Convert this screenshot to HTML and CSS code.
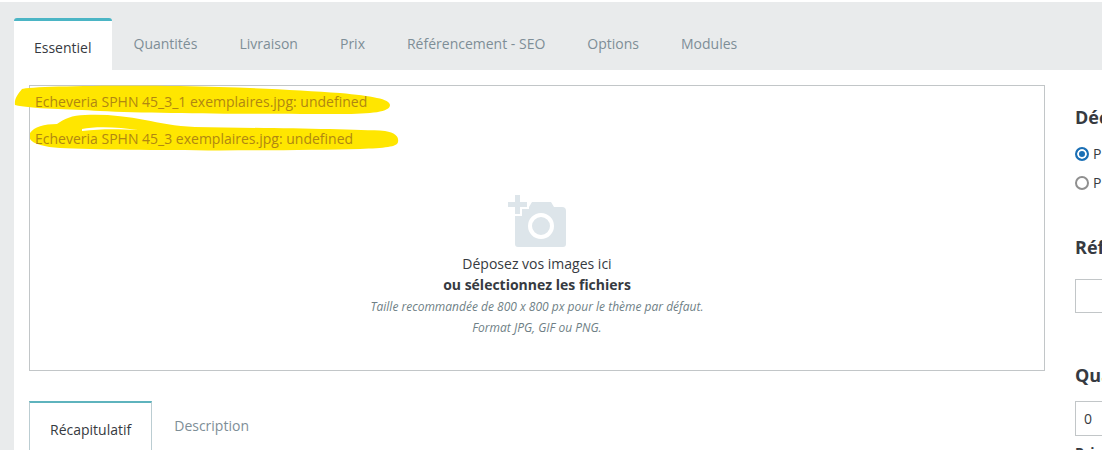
FILE: index.html
```html
<!DOCTYPE html>
<html lang="fr">
<head>
    <meta charset="UTF-8">
    <title>Produit</title>
    <link rel="stylesheet" href="styles.css">
</head>
<body>
    <nav class="tabs">
        <a class="tab active">Essentiel</a>
        <a class="tab">Quantités</a>
        <a class="tab">Livraison</a>
        <a class="tab">Prix</a>
        <a class="tab">Référencement - SEO</a>
        <a class="tab">Options</a>
        <a class="tab">Modules</a>
    </nav>
    <div class="panel">
        <main class="main">
            <section class="dropzone">
                <!-- coups de surligneur par-dessus les messages d'erreur -->
                <svg class="marker" width="420" height="80" viewBox="0 0 420 80">
                    <path fill="#ffe600" d="M22 4C28 1 120 0 180 1C240 2 300 5 340 8C372 11 390 14 390 20C390 27 372 29 340 29C280 29 160 29 100 26C70 24 30 24 15 20C14 14 18 9 22 4Z"/>
                    <path fill="#ffe600" d="M30 48C34 42 44 39 57 39C64 34 72 30 85 30C105 29 125 31 145 35C160 38 175 41 195 42C260 43 350 44 385 46C396 48 399 52 398 57C397 62 385 63 360 64C280 66 120 66 60 63C45 62 33 59 30 54Z"/>
                    <path fill="#fff" d="M82 44C95 41 120 42 138 45C115 44 100 44 82 46Z"/>
                </svg>
                <div class="errors">
                    <p>Echeveria SPHN 45_3_1 exemplaires.jpg: undefined</p>
                    <p>Echeveria SPHN 45_3 exemplaires.jpg: undefined</p>
                </div>
                <div class="drop-msg">
                    <svg class="camera" width="60" height="54" viewBox="0 0 60 54">
                        <path fill="#dde5ea" d="M8 13H22L25 8H44L47 13H55Q59 13 59 17V50Q59 53 56 53H11Q8 53 8 50Z"/>
                        <path fill="#dde5ea" stroke="#fff" stroke-width="2" d="M7 0H14V7H21V14H14V21H7V14H0V7H7Z"/>
                        <circle cx="34" cy="32" r="11" fill="none" stroke="#fff" stroke-width="4"/>
                    </svg>
                    <p class="drop-title">Déposez vos images ici</p>
                    <p class="drop-link">ou sélectionnez les fichiers</p>
                    <p class="drop-hint">Taille recommandée de 800 x 800 px pour le thème par défaut.</p>
                    <p class="drop-hint">Format JPG, GIF ou PNG.</p>
                </div>
            </section>
            <nav class="subtabs">
                <a class="subtab active">Récapitulatif</a>
                <a class="subtab">Description</a>
            </nav>
        </main>
        <aside class="side">
            <h2 class="side-title">Déclinaisons</h2>
            <label class="radio checked">Produit simple</label>
            <label class="radio">Produit avec déclinaisons</label>
            <h2 class="side-title ref">Référence</h2>
            <div class="field"></div>
            <h2 class="side-title qty">Quantité</h2>
            <div class="field field-qty">0</div>
            <p class="side-next">Prix</p>
        </aside>
    </div>
</body>
</html>
```

FILE: styles.css
```css
html, body {
    height: 450px;
    overflow: hidden;
}
body {
    margin: 0;
    padding: 0 0 0 14px;
    box-sizing: border-box;
    background: #e9ebec;
    border-top: 2px solid #fff;
    font-family: "Open Sans", sans-serif;
    font-size: 14px;
    color: #363a41;
}
p {
    margin: 0;
}
.tabs {
    display: flex;
    height: 52px;
    margin-top: 16px;
}
.tab {
    padding: 16px 21px 0;
    color: #7e8e97;
    font-size: 14px;
    line-height: 20px;
}
.tab.active {
    margin-right: 1px;
    padding: 17px 20px 0;
    border-top: 3px solid #4bb5c5;
    border-radius: 3px 3px 0 0;
    background: #fff;
    color: #363a41;
    box-sizing: border-box;
}
.panel {
    display: flex;
    width: 1088px;
    height: 380px;
    padding: 15px 0 0 15px;
    box-sizing: border-box;
    background: #fff;
    overflow: hidden;
}
.main {
    flex: none;
    width: 1016px;
}
.dropzone {
    position: relative;
    height: 286px;
    border: 1px solid #c2c6c8;
    box-sizing: border-box;
}
.marker {
    position: absolute;
    left: -30px;
    top: -1px;
}
.errors {
    position: relative;
    padding: 6px 0 0 5px;
    color: #b08612;
    font-size: 14px;
    line-height: 20px;
}
.errors p {
    margin-bottom: 17px;
}
.drop-msg {
    display: flex;
    flex-direction: column;
    align-items: center;
    margin-top: 45px;
    text-align: center;
}
.camera {
    margin-bottom: 5px;
}
.drop-title {
    line-height: 21px;
}
.drop-link {
    font-weight: 700;
    line-height: 21px;
}
.drop-hint {
    color: #6f7f86;
    font-size: 12px;
    font-style: italic;
    line-height: 21px;
}
.drop-link + .drop-hint {
    margin-top: 1px;
}
.subtabs {
    display: flex;
    margin-top: 30px;
}
.subtab {
    padding: 15px 22px 0;
    color: #7e8e97;
    line-height: 20px;
}
.subtab.active {
    height: 60px;
    padding: 17px 20px 0;
    border: 1px solid #bbcdd2;
    border-top: 2px solid #5eb3bd;
    box-sizing: border-box;
    color: #363a41;
}
.side {
    flex: none;
    width: 300px;
    padding: 20px 0 0 30px;
}
.side-title {
    margin: 0 0 10px;
    font-size: 18px;
    line-height: 24px;
    font-weight: 700;
    color: #363a41;
}
.side-title.ref {
    margin-top: 38px;
    margin-bottom: 20px;
}
.side-title.qty {
    margin-top: 50px;
    margin-bottom: 14px;
}
.radio {
    display: flex;
    align-items: center;
    gap: 4px;
    height: 29px;
    white-space: nowrap;
}
.radio::before {
    content: "";
    flex: none;
    width: 10px;
    height: 10px;
    border: 2px solid #8f8f8f;
    border-radius: 50%;
}
.radio.checked::before {
    border-color: #1a6fb5;
    background: #1a6fb5;
    box-shadow: inset 0 0 0 2px #fff;
}
.field {
    width: 200px;
    height: 34px;
    padding-left: 8px;
    border: 1px solid #c2c6c8;
    box-sizing: border-box;
    line-height: 34px;
}
.field-qty {
    height: 35px;
}
.side-next {
    margin-top: 7px;
    font-weight: 700;
}
```
